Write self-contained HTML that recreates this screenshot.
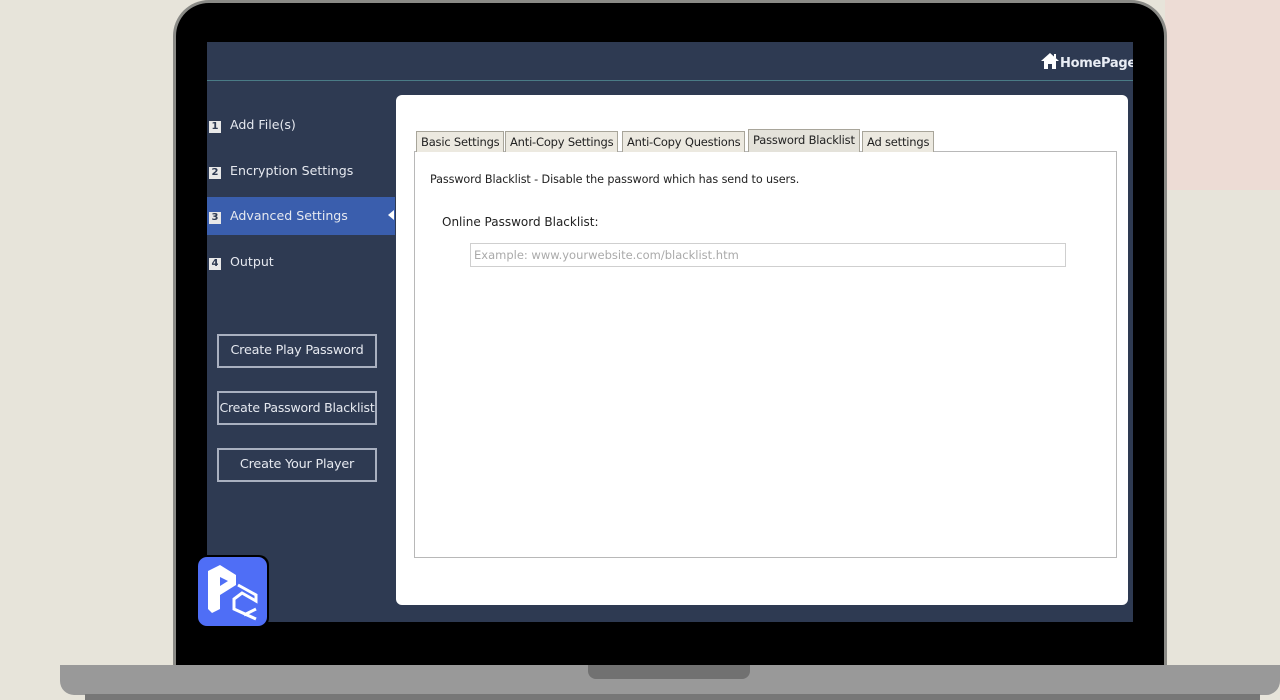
<!DOCTYPE html>
<html><head><style>
*{margin:0;padding:0;box-sizing:border-box}
body{width:1280px;height:700px;overflow:hidden;position:relative;background:#e7e4da;font-family:"DejaVu Sans","Liberation Sans",sans-serif}
.abs{position:absolute}
.side{color:#e6e9f0;font-size:12.6px}
.num{display:inline-block;width:12px;height:12px;background:#e8e8e8;color:#2e3a52;font-size:10px;line-height:12px;text-align:center;margin-right:9px;vertical-align:0px;font-weight:bold}
.btn{position:absolute;left:217px;width:160px;height:34px;border:2px solid #a9b0c0;color:#e6e9f0;font-size:12.8px;text-align:center;line-height:30px;white-space:nowrap;letter-spacing:-0.2px;overflow:hidden}
.tab{position:absolute;top:131px;height:21px;background:#ece9e0;border:1px solid #a8a59a;border-bottom:none;font-size:11.5px;line-height:20px;padding:0 4px;color:#222;white-space:nowrap;letter-spacing:-0.2px}
</style></head><body>
<div class="abs" style="left:1165px;top:0;width:115px;height:190px;background:#eddcd5"></div>
<!-- bezel -->
<div class="abs" style="left:173px;top:0;width:994px;height:670px;background:#8a8a86;border-radius:36px 36px 0 0"></div>
<div class="abs" style="left:176px;top:3px;width:988px;height:667px;background:#000;border-radius:33px 33px 0 0"></div>
<!-- screen -->
<div class="abs" style="left:207px;top:42px;width:926px;height:580px;background:#2e3a52;overflow:hidden">
<div class="abs" style="left:0;top:38px;width:926px;height:1px;background:#4a7b86"></div>
<div class="abs" style="left:833px;top:10px;color:#e8ecf4;font-size:13px;font-weight:bold;white-space:nowrap;letter-spacing:-0.3px">
<svg width="20" height="17" viewBox="0 0 20 17" style="vertical-align:-2px"><path d="M10 1L1 9h3v8h4v-5h4v5h4V9h3z" fill="#fff"/><rect x="14" y="2" width="2" height="4" fill="#fff"/></svg>HomePage</div>
</div>
<!-- sidebar -->
<div class="abs" style="left:207px;top:197px;width:188px;height:38px;background:#3a5ead"></div>
<div class="abs" style="left:388px;top:210px;width:0;height:0;border-top:5px solid transparent;border-bottom:5px solid transparent;border-right:6px solid #fff"></div>
<div class="abs side" style="left:209px;top:117px"><span class="num">1</span>Add File(s)</div>
<div class="abs side" style="left:209px;top:163px"><span class="num">2</span>Encryption Settings</div>
<div class="abs side" style="left:209px;top:208px"><span class="num">3</span>Advanced Settings</div>
<div class="abs side" style="left:209px;top:254px"><span class="num">4</span>Output</div>
<div class="btn" style="top:334px">Create Play Password</div>
<div class="btn" style="top:391px;font-size:12.5px">Create Password Blacklist</div>
<div class="btn" style="top:448px">Create Your Player</div>
<!-- panel -->
<div class="abs" style="left:396px;top:95px;width:732px;height:510px;background:#fff;border-radius:6px"></div>
<div class="abs" style="left:414px;top:151px;width:703px;height:407px;border:1px solid #b8b8b8;background:#fff"></div>
<div class="tab" style="left:416px">Basic Settings</div>
<div class="tab" style="left:505px">Anti-Copy Settings</div>
<div class="tab" style="left:622px">Anti-Copy Questions</div>
<div class="tab" style="left:748px;top:129px;height:23px;background:#e4e2da">Password Blacklist</div>
<div class="tab" style="left:862px">Ad settings</div>
<div class="abs" style="left:430px;top:173px;font-size:11.2px;color:#222;letter-spacing:-0.1px">Password Blacklist - Disable the password which has send to users.</div>
<div class="abs" style="left:442px;top:215px;font-size:12px;color:#222">Online Password Blacklist:</div>
<div class="abs" style="left:470px;top:243px;width:596px;height:24px;border:1px solid #cfcfcf;font-size:11.5px;color:#aaa;line-height:22px;padding-left:3px">Example: www.yourwebsite.com/blacklist.htm</div>
<!-- logo -->
<div class="abs" style="left:196px;top:555px;width:73px;height:73px;background:#000;border-radius:10px"></div>
<div class="abs" style="left:198px;top:557px;width:69px;height:69px;background:#4f6ef6;border-radius:9px;overflow:hidden">
<svg width="69" height="69" viewBox="0 0 69 69"><path d="M10 14L22 8L38 18L38 28L22 38L22 52L14 56L10 52Z" fill="#fff"/><path d="M22 20L30 24L22 29Z" fill="#4f6ef6"/><path d="M40 28L58 38L58 44L44 36L36 42L36 52L58 62M58 52L46 58" stroke="#fff" stroke-width="3" fill="none"/></svg></div>
<!-- base -->
<div class="abs" style="left:60px;top:665px;width:1220px;height:30px;background:#999;border-radius:0 0 14px 14px"></div>
<div class="abs" style="left:85px;top:694px;width:1175px;height:6px;background:#777"></div>
<div class="abs" style="left:588px;top:665px;width:162px;height:14px;background:#717171;border-radius:0 0 8px 8px"></div>
</body></html>
